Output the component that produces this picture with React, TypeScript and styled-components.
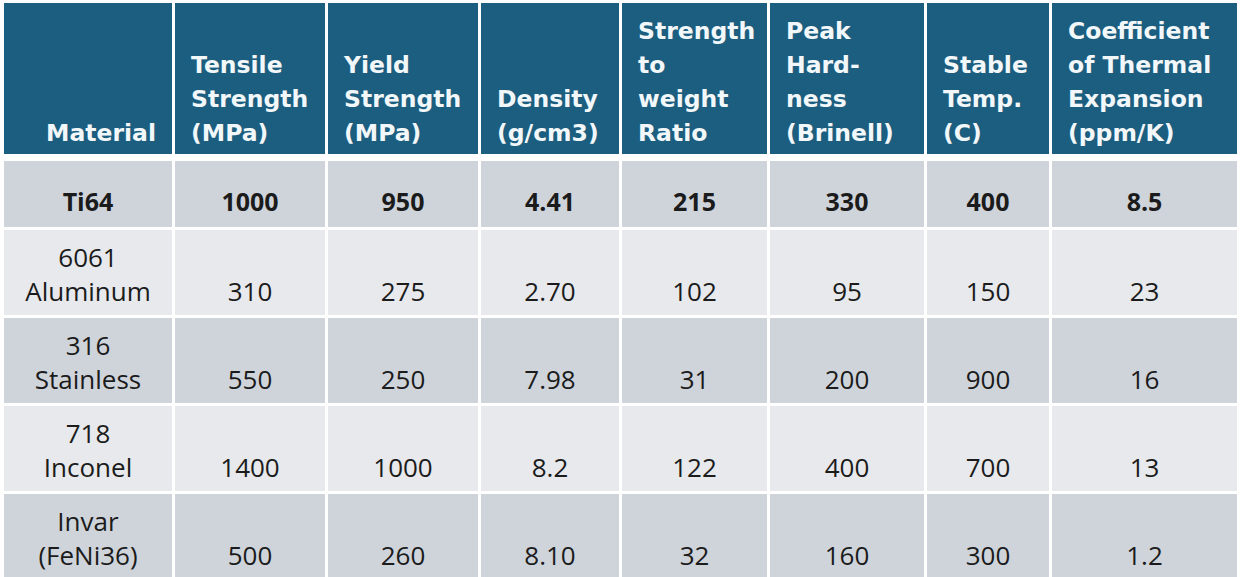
import React from "react";
import styled, { createGlobalStyle } from "styled-components";

const Global = createGlobalStyle`
  html, body { margin: 0; padding: 0; background: #ffffff; }
  body { width: 1240px; height: 577px; overflow: hidden; }
`;

const COLS = "168px 150px 150px 138px 145px 154px 122px 185px";

const Page = styled.div`
  padding: 3px 3px 0 4px;
  display: flex;
  flex-direction: column;
  gap: 7px;
`;

const HeaderRow = styled.div`
  display: grid;
  grid-template-columns: ${COLS};
  column-gap: 3px;
  height: 151px;
`;

const HeadCell = styled.div<{ $right?: boolean }>`
  background: #1c5e7f;
  color: #f2f7fa;
  font-family: "DejaVu Sans", "Open Sans", sans-serif;
  font-weight: 700;
  font-size: 23.5px;
  line-height: 34px;
  display: flex;
  flex-direction: column;
  justify-content: flex-end;
  align-items: ${(p) => (p.$right ? "flex-end" : "flex-start")};
  padding: 0 ${(p) => (p.$right ? "16px" : "2px")} 4px 16px;
  white-space: nowrap;
`;

const Body = styled.div`
  display: flex;
  flex-direction: column;
  gap: 3px;
`;

const Row = styled.div<{ $h: number }>`
  display: grid;
  grid-template-columns: ${COLS};
  column-gap: 3px;
  height: ${(p) => p.$h}px;
`;

const Cell = styled.div<{ $dark: boolean; $bold: boolean; $pb: number }>`
  background: ${(p) => (p.$dark ? "#cfd4db" : "#e7e9ec")};
  color: #1b1b1b;
  font-family: "Open Sans", "Liberation Sans", sans-serif;
  font-weight: ${(p) => (p.$bold ? 700 : 400)};
  font-size: ${(p) => (p.$bold ? "25px" : "26px")};
  line-height: 34px;
  display: flex;
  flex-direction: column;
  justify-content: flex-end;
  align-items: center;
  text-align: center;
  padding-bottom: ${(p) => p.$pb}px;
  white-space: nowrap;
`;

const headers: string[][] = [
  ["Material"],
  ["Tensile", "Strength", "(MPa)"],
  ["Yield", "Strength", "(MPa)"],
  ["Density", "(g/cm3)"],
  ["Strength", "to", "weight", "Ratio"],
  ["Peak", "Hard-", "ness", "(Brinell)"],
  ["Stable", "Temp.", "(C)"],
  ["Coefficient", "of Thermal", "Expansion", "(ppm/K)"],
];

const rows: { name: string[]; values: string[]; bold?: boolean }[] = [
  { name: ["Ti64"], values: ["1000", "950", "4.41", "215", "330", "400", "8.5"], bold: true },
  { name: ["6061", "Aluminum"], values: ["310", "275", "2.70", "102", "95", "150", "23"] },
  { name: ["316", "Stainless"], values: ["550", "250", "7.98", "31", "200", "900", "16"] },
  { name: ["718", "Inconel"], values: ["1400", "1000", "8.2", "122", "400", "700", "13"] },
  { name: ["Invar", "(FeNi36)"], values: ["500", "260", "8.10", "32", "160", "300", "1.2"] },
];

export default function App() {
  return (
    <>
      <Global />
      <Page>
        <HeaderRow>
          {headers.map((lines, i) => (
            <HeadCell key={i} $right={i === 0}>
              {lines.map((l, j) => (
                <span key={j}>{l}</span>
              ))}
            </HeadCell>
          ))}
        </HeaderRow>
        <Body>
          {rows.map((r, i) => {
            const dark = i % 2 === 0;
            const bold = !!r.bold;
            const pb = bold ? 9 : 7;
            return (
              <Row key={i} $h={bold ? 66 : 85}>
                <Cell $dark={dark} $bold={bold} $pb={pb}>
                  {r.name.map((n, j) => (
                    <span key={j}>{n}</span>
                  ))}
                </Cell>
                {r.values.map((v, j) => (
                  <Cell key={j} $dark={dark} $bold={bold} $pb={pb}>
                    <span>{v}</span>
                  </Cell>
                ))}
              </Row>
            );
          })}
        </Body>
      </Page>
    </>
  );
}
